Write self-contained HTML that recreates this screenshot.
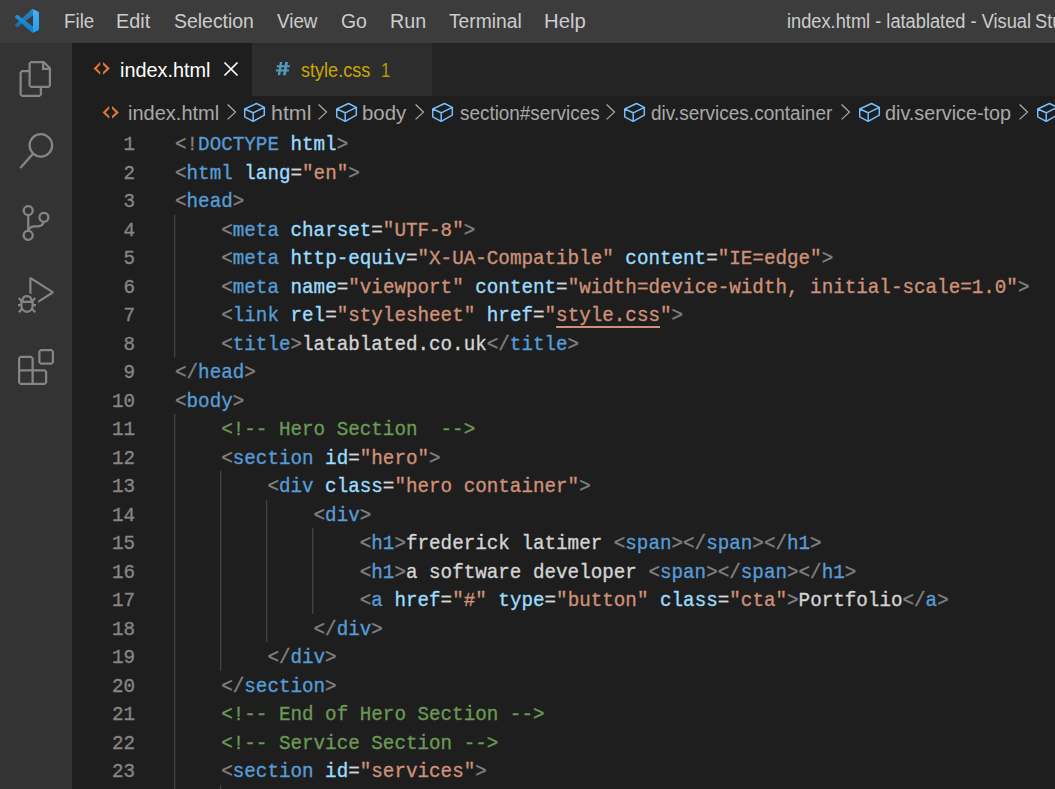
<!DOCTYPE html>
<html><head><meta charset="utf-8"><title>VS Code</title>
<style>
html,body{margin:0;padding:0;width:1055px;height:789px;overflow:hidden;background:#1e1e1e;position:relative}
body{font-family:"Liberation Sans",sans-serif}
#title{position:absolute;left:0;top:0;width:1055px;height:43px;background:#3c3c3c}
#act{position:absolute;left:0;top:43px;width:72px;height:746px;background:#333333}
.ai{position:absolute;left:18px}
.tab{position:absolute;top:0;height:53px}
#tabs{position:absolute;left:72px;top:43px;width:983px;height:53px;background:#252526}
.ln{position:absolute;left:79.4px;width:56px;transform:scaleX(0.93);transform-origin:100% 0;text-align:right;height:28.5px;line-height:28.5px;margin-top:2px;font-family:"Liberation Mono",monospace;font-size:20.7px;color:#858585;-webkit-text-stroke:0.35px}
.cl{position:absolute;left:175px;height:28.5px;line-height:28.5px;margin-top:2px;font-family:"Liberation Mono",monospace;font-size:20.7px;white-space:pre;color:#d4d4d4;transform:scaleX(0.93);transform-origin:0 0;-webkit-text-stroke:0.35px}
.t{position:absolute;white-space:nowrap;transform-origin:0 0}
.ic{position:absolute;display:block}
.g{position:absolute;width:1px;background:#424242;box-shadow:1px 0 0 #2a2a2a}
.p{color:#808080} .n{color:#569cd6} .a{color:#9cdcfe} .s{color:#ce9178} .x{color:#d4d4d4} .c{color:#6a9955}
.u{text-decoration:underline;text-decoration-thickness:2px;text-underline-offset:5px}
</style></head><body>
<div id="title"><svg style="position:absolute;left:15px;top:9px" width="24" height="24" viewBox="0 0 100 100">
<defs><linearGradient id="vg" x1="0" y1="0" x2="0" y2="1"><stop offset="0" stop-color="#fff" stop-opacity="0.2"/><stop offset="1" stop-color="#fff" stop-opacity="0.02"/></linearGradient><clipPath id="vc"><path clip-rule="evenodd" d="M70.9119 99.3171C72.4869 99.9307 74.2828 99.8914 75.8725 99.1264L96.4608 89.2197C98.6242 88.1787 100 85.9892 100 83.5872V16.4133C100 14.0113 98.6243 11.8218 96.4609 10.7808L75.8725 0.873756C73.7862 -0.130129 71.3446 0.11576 69.5135 1.44695C69.252 1.63711 69.0028 1.84943 68.769 2.08341L29.3551 38.0415L12.1872 25.0096C10.589 23.7965 8.35363 23.8959 6.86933 25.2461L1.36303 30.2549C-0.452552 31.9064 -0.454633 34.7627 1.35853 36.417L16.2471 50.0001L1.35853 63.5832C-0.454633 65.2374 -0.452552 68.0938 1.36303 69.7453L6.86933 74.7541C8.35363 76.1043 10.589 76.2037 12.1872 74.9905L29.3551 61.9587L68.769 97.9167C69.3925 98.5406 70.1246 99.0104 70.9119 99.3171ZM75.0152 27.2989L45.1091 50.0001L75.0152 72.7012V27.2989Z"/></clipPath></defs>
<g clip-path="url(#vc)">
<path d="M96.4614 10.7962L75.8569 0.875542C73.4719 -0.272773 70.6217 0.211611 68.75 2.08333L1.29858 63.5832C-0.515693 65.2373 -0.513607 68.0937 1.30308 69.7452L6.81272 74.754C8.29793 76.1042 10.5347 76.2036 12.1338 74.9905L93.3609 13.3699C96.0859 11.3026 100 13.2462 100 16.6667V16.4275C100 14.0265 98.6246 11.8378 96.4614 10.7962Z" fill="#0065A9"/>
<path d="M96.4614 89.2038L75.8569 99.1245C73.4719 100.273 70.6217 99.7884 68.75 97.9167L1.29858 36.4169C-0.515693 34.7627 -0.513607 31.9063 1.30308 30.2548L6.81272 25.246C8.29793 23.8958 10.5347 23.7964 12.1338 25.0095L93.3609 86.6301C96.0859 88.6974 100 86.7538 100 83.3334V83.5726C100 85.9735 98.6246 88.1622 96.4614 89.2038Z" fill="#007ACC"/>
<path d="M75.8578 99.1263C73.4721 100.274 70.6219 99.7885 68.75 97.9166C71.0564 100.223 75 98.5895 75 95.3278V4.67213C75 1.41039 71.0564 -0.223106 68.75 2.08329C70.6219 0.211402 73.4721 -0.273666 75.8578 0.873633L96.4587 10.7807C98.6234 11.8217 100 14.0112 100 16.4132V83.5871C100 85.9891 98.6234 88.1786 96.4586 89.2196L75.8578 99.1263Z" fill="#1F9CF0"/>
<rect x="0" y="0" width="100" height="100" fill="url(#vg)"/>
</g></svg><div class="t" style="left:64.16px;top:12.49px;font-size:19.5px;line-height:19.5px;color:#cccccc;transform:scaleX(0.9621);">File</div><div class="t" style="left:116.37px;top:12.49px;font-size:19.5px;line-height:19.5px;color:#cccccc;transform:scaleX(1.0157);">Edit</div><div class="t" style="left:173.90px;top:12.49px;font-size:19.5px;line-height:19.5px;color:#cccccc;transform:scaleX(0.9962);">Selection</div><div class="t" style="left:277.20px;top:12.49px;font-size:19.5px;line-height:19.5px;color:#cccccc;transform:scaleX(0.9641);">View</div><div class="t" style="left:341.00px;top:12.49px;font-size:19.5px;line-height:19.5px;color:#cccccc;transform:scaleX(0.9959);">Go</div><div class="t" style="left:389.59px;top:12.49px;font-size:19.5px;line-height:19.5px;color:#cccccc;transform:scaleX(1.0091);">Run</div><div class="t" style="left:449.21px;top:12.49px;font-size:19.5px;line-height:19.5px;color:#cccccc;transform:scaleX(0.9861);">Terminal</div><div class="t" style="left:544.04px;top:12.49px;font-size:19.5px;line-height:19.5px;color:#cccccc;transform:scaleX(1.0397);">Help</div><div class="t" style="left:787.18px;top:12.49px;font-size:19.5px;line-height:19.5px;color:#cccccc;transform:scaleX(0.9353);">index.html - latablated - Visual</div><div class="t" style="left:1035.06px;top:12.49px;font-size:19.5px;line-height:19.5px;color:#cccccc;transform:scaleX(0.9353)">Studio Code</div></div>
<div id="act"><svg class="ai" style="top:18px" width="36" height="36" viewBox="0 0 24 24" fill="#858585"><path fill-rule="evenodd" clip-rule="evenodd" d="M17.5 0h-9L7 1.5V6H2.5L1 7.5v15.07L2.5 24h12.07L16 22.57V18h4.7l1.3-1.43V4.5L17.5 0zm0 2.12l2.38 2.38H17.5V2.12zm-3 20.38h-12v-15H7v9.07L8.5 18h6v4.5zm6-6h-12v-15H16V6h4.5v10.5z"/></svg><svg class="ai" style="top:90px" width="36" height="36" viewBox="0 0 24 24" fill="#858585"><path fill-rule="evenodd" clip-rule="evenodd" d="M15.25 0a8.25 8.25 0 0 0-6.18 13.72L1 22.880l1.12 1 8.05-9.12A8.251 8.251 0 1 0 15.25.01V0zm0 15a6.75 6.75 0 1 1 0-13.5 6.75 6.75 0 0 1 0 13.5z"/></svg><svg class="ai" style="top:162px" width="36" height="36" viewBox="0 0 24 24" fill="#858585"><path fill-rule="evenodd" clip-rule="evenodd" d="M21.007 8.222A3.738 3.738 0 0 0 15.045 5.2a3.737 3.737 0 0 0 1.156 6.583 2.988 2.988 0 0 1-2.668 1.67h-2.99a4.456 4.456 0 0 0-2.989 1.165V7.4a3.737 3.737 0 1 0-1.494 0v9.117a3.776 3.776 0 1 0 1.816.099 2.99 2.990 0 0 1 2.668-1.667h2.99a4.484 4.484 0 0 0 4.223-3.039 3.736 3.736 0 0 0 3.25-3.687zM4.565 3.738a2.242 2.242 0 1 1 4.484 0 2.242 2.242 0 0 1-4.484 0zm4.484 16.441a2.242 2.242 0 1 1-4.484 0 2.242 2.242 0 0 1 4.484 0zm8.221-9.715a2.242 2.242 0 1 1 0-4.485 2.242 2.242 0 0 1 0 4.485z"/></svg><svg class="ai" style="top:234px" width="36" height="36" viewBox="0 0 24 24" fill="#858585"><path fill-rule="evenodd" clip-rule="evenodd" d="M10.94 13.5l-1.32 1.32a3.73 3.73 0 0 0-7.24 0L1.06 13.5 0 14.56l1.72 1.72-.22.22V18H0v1.5h1.5v.08c.077.489.214.966.41 1.42L0 22.94 1.06 24l1.65-1.65A4.308 4.308 0 0 0 6 24a4.31 4.310 0 0 0 3.29-1.650L10.94 24 12 22.94 10.09 21c.198-.464.336-.951.41-1.45v-.1H12V18h-1.5v-1.5l-.22-.22L12 14.560l-1.06-1.06zM6 13.5a2.25 2.25 0 0 1 2.25 2.25h-4.5A2.25 2.25 0 0 1 6 13.5zm3 6a3.33 3.33 0 0 1-3 3 3.33 3.33 0 0 1-3-3v-2.25h6v2.25zm14.76-9.9v1.26L13.5 17.37V15.6l8.5-5.37L9 2v9.46a5.07 5.07 0 0 0-1.5-.72V.63L8.64 0l15.12 9.6z"/></svg><svg class="ai" style="top:306px" width="36" height="36" viewBox="0 0 24 24" fill="#858585"><path fill-rule="evenodd" clip-rule="evenodd" d="M13.5 1.5L15 0h7.5L24 1.5V9l-1.5 1.5H15L13.5 9V1.5zm1.5 0V9h7.5V1.5H15zM0 15V6l1.5-1.5H9L10.5 6v7.5H18l1.5 1.5v7.5L18 24H1.5L0 22.5V15zm9-1.5V6H1.5v7.5H9zM9 15H1.5v7.5H9V15zm1.5 7.5H18V15h-7.5v7.5z"/></svg></div>
<div id="tabs">
 <div class="tab" style="left:0;width:180px;background:#1e1e1e"></div>
 <div class="tab" style="left:180px;width:180px;background:#2d2d2d"></div>
</div>
<div class="t" style="left:119.68px;top:61.29px;font-size:19.5px;line-height:19.5px;color:#ffffff;transform:scaleX(1.0174);">index.html</div><div class="t" style="left:301.34px;top:61.29px;font-size:19.5px;line-height:19.5px;color:#cca700;transform:scaleX(0.9266);">style.css</div><div class="t" style="left:381.21px;top:61.29px;font-size:19.5px;line-height:19.5px;color:#b8960a;transform:scaleX(0.8571);">1</div><svg class="ic" style="left:93px;top:61px" width="18" height="15" viewBox="0 0 18 15"><path fill="#e37933" d="M7.2 1 L0.6 7.4 L7.2 13.8 L7.2 11 L3.6 7.4 L7.2 3.8 Z M10 1 L16.9 7.4 L10 13.8 L10 11 L13.6 7.4 L10 3.8 Z"/></svg><svg class="ic" style="left:222px;top:60px" width="18" height="18" viewBox="0 0 18 18"><path d="M2.5 2.5 L15.5 15.5 M15.5 2.5 L2.5 15.5" stroke="#ffffff" stroke-width="1.7"/></svg><svg class="ic" style="left:275px;top:61px" width="16" height="15" viewBox="0 0 16 15"><path fill="#519aba" d="M4.9 1 L7.3 1 L5.2 14.2 L2.7 14.2 Z M10.2 1 L13 1 L10.8 14.2 L8 14.2 Z M1.8 4.2 H14.8 V6.3 H1.8 Z M0.9 8.5 H13.9 V10.6 H0.9 Z"/></svg>
<svg class="ic" style="left:102px;top:105px" width="18" height="15" viewBox="0 0 18 15"><path fill="#e37933" d="M7.2 1 L0.6 7.4 L7.2 13.8 L7.2 11 L3.6 7.4 L7.2 3.8 Z M10 1 L16.9 7.4 L10 13.8 L10 11 L13.6 7.4 L10 3.8 Z"/></svg><div class="t" style="left:128.17px;top:104.29px;font-size:19.5px;line-height:19.5px;color:#a9a9a9;transform:scaleX(1.0267);">index.html</div><svg class="ic" style="left:226px;top:103px" width="12" height="18" viewBox="0 0 12 18"><path d="M1.6 1.5 L9.4 9.1 L1.6 16.4" stroke="#a9a9a9" stroke-width="1.3" fill="none"/></svg><svg class="ic" style="left:244.1px;top:102px" width="22" height="21" viewBox="0 0 22 21"><path d="M12.5 1.5 L20.3 5.3 L20.3 13.2 L9.2 19.3 L0.7 14.8 L0.7 7 Z M0.7 7 L9.2 10.8 L20.3 5.3 M9.2 10.8 L9.2 19.3" stroke="#75beff" stroke-width="1.5" stroke-linejoin="round" fill="none"/></svg><div class="t" style="left:270.77px;top:104.29px;font-size:19.5px;line-height:19.5px;color:#a9a9a9;transform:scaleX(1.0962);">html</div><svg class="ic" style="left:317.1px;top:103px" width="12" height="18" viewBox="0 0 12 18"><path d="M1.6 1.5 L9.4 9.1 L1.6 16.4" stroke="#a9a9a9" stroke-width="1.3" fill="none"/></svg><svg class="ic" style="left:336.0px;top:102px" width="22" height="21" viewBox="0 0 22 21"><path d="M12.5 1.5 L20.3 5.3 L20.3 13.2 L9.2 19.3 L0.7 14.8 L0.7 7 Z M0.7 7 L9.2 10.8 L20.3 5.3 M9.2 10.8 L9.2 19.3" stroke="#75beff" stroke-width="1.5" stroke-linejoin="round" fill="none"/></svg><div class="t" style="left:362.35px;top:104.29px;font-size:19.5px;line-height:19.5px;color:#a9a9a9;transform:scaleX(1.0439);">body</div><svg class="ic" style="left:413.8px;top:103px" width="12" height="18" viewBox="0 0 12 18"><path d="M1.6 1.5 L9.4 9.1 L1.6 16.4" stroke="#a9a9a9" stroke-width="1.3" fill="none"/></svg><svg class="ic" style="left:432.0px;top:102px" width="22" height="21" viewBox="0 0 22 21"><path d="M12.5 1.5 L20.3 5.3 L20.3 13.2 L9.2 19.3 L0.7 14.8 L0.7 7 Z M0.7 7 L9.2 10.8 L20.3 5.3 M9.2 10.8 L9.2 19.3" stroke="#75beff" stroke-width="1.5" stroke-linejoin="round" fill="none"/></svg><div class="t" style="left:459.52px;top:104.29px;font-size:19.5px;line-height:19.5px;color:#a9a9a9;transform:scaleX(0.9685);">section#services</div><svg class="ic" style="left:604.8px;top:103px" width="12" height="18" viewBox="0 0 12 18"><path d="M1.6 1.5 L9.4 9.1 L1.6 16.4" stroke="#a9a9a9" stroke-width="1.3" fill="none"/></svg><svg class="ic" style="left:624.4px;top:102px" width="22" height="21" viewBox="0 0 22 21"><path d="M12.5 1.5 L20.3 5.3 L20.3 13.2 L9.2 19.3 L0.7 14.8 L0.7 7 Z M0.7 7 L9.2 10.8 L20.3 5.3 M9.2 10.8 L9.2 19.3" stroke="#75beff" stroke-width="1.5" stroke-linejoin="round" fill="none"/></svg><div class="t" style="left:651.12px;top:104.29px;font-size:19.5px;line-height:19.5px;color:#a9a9a9;transform:scaleX(0.9746);">div.services.container</div><svg class="ic" style="left:839.7px;top:103px" width="12" height="18" viewBox="0 0 12 18"><path d="M1.6 1.5 L9.4 9.1 L1.6 16.4" stroke="#a9a9a9" stroke-width="1.3" fill="none"/></svg><svg class="ic" style="left:858.8px;top:102px" width="22" height="21" viewBox="0 0 22 21"><path d="M12.5 1.5 L20.3 5.3 L20.3 13.2 L9.2 19.3 L0.7 14.8 L0.7 7 Z M0.7 7 L9.2 10.8 L20.3 5.3 M9.2 10.8 L9.2 19.3" stroke="#75beff" stroke-width="1.5" stroke-linejoin="round" fill="none"/></svg><div class="t" style="left:884.99px;top:104.29px;font-size:19.5px;line-height:19.5px;color:#a9a9a9;transform:scaleX(1.0139);">div.service-top</div><svg class="ic" style="left:1018.2px;top:103px" width="12" height="18" viewBox="0 0 12 18"><path d="M1.6 1.5 L9.4 9.1 L1.6 16.4" stroke="#a9a9a9" stroke-width="1.3" fill="none"/></svg><svg class="ic" style="left:1036.5px;top:102px" width="22" height="21" viewBox="0 0 22 21"><path d="M12.5 1.5 L20.3 5.3 L20.3 13.2 L9.2 19.3 L0.7 14.8 L0.7 7 Z M0.7 7 L9.2 10.8 L20.3 5.3 M9.2 10.8 L9.2 19.3" stroke="#75beff" stroke-width="1.5" stroke-linejoin="round" fill="none"/></svg>
<div class="g" style="left:174px;top:214.5px;height:142.5px"></div><div class="g" style="left:174px;top:414.0px;height:399.0px"></div><div class="g" style="left:220px;top:471.0px;height:199.5px"></div><div class="g" style="left:266px;top:499.5px;height:142.5px"></div><div class="g" style="left:312px;top:528.0px;height:85.5px"></div><div class="g" style="left:220px;top:784.5px;height:28.5px"></div>
<div class="ln" style="top:129.0px">1</div><div class="cl" style="top:129.0px"><span class="p">&lt;!</span><span class="n">DOCTYPE</span> <span class="a">html</span><span class="p">&gt;</span></div><div class="ln" style="top:157.5px">2</div><div class="cl" style="top:157.5px"><span class="p">&lt;</span><span class="n">html</span> <span class="a">lang</span><span class="x">=</span><span class="s">"en"</span><span class="p">&gt;</span></div><div class="ln" style="top:186.0px">3</div><div class="cl" style="top:186.0px"><span class="p">&lt;</span><span class="n">head</span><span class="p">&gt;</span></div><div class="ln" style="top:214.5px">4</div><div class="cl" style="top:214.5px">    <span class="p">&lt;</span><span class="n">meta</span> <span class="a">charset</span><span class="x">=</span><span class="s">"UTF-8"</span><span class="p">&gt;</span></div><div class="ln" style="top:243.0px">5</div><div class="cl" style="top:243.0px">    <span class="p">&lt;</span><span class="n">meta</span> <span class="a">http-equiv</span><span class="x">=</span><span class="s">"X-UA-Compatible"</span> <span class="a">content</span><span class="x">=</span><span class="s">"IE=edge"</span><span class="p">&gt;</span></div><div class="ln" style="top:271.5px">6</div><div class="cl" style="top:271.5px">    <span class="p">&lt;</span><span class="n">meta</span> <span class="a">name</span><span class="x">=</span><span class="s">"viewport"</span> <span class="a">content</span><span class="x">=</span><span class="s">"width=device-width, initial-scale=1.0"</span><span class="p">&gt;</span></div><div class="ln" style="top:300.0px">7</div><div class="cl" style="top:300.0px">    <span class="p">&lt;</span><span class="n">link</span> <span class="a">rel</span><span class="x">=</span><span class="s">"stylesheet"</span> <span class="a">href</span><span class="x">=</span><span class="s">"</span><span class="s u">style.css</span><span class="s">"</span><span class="p">&gt;</span></div><div class="ln" style="top:328.5px">8</div><div class="cl" style="top:328.5px">    <span class="p">&lt;</span><span class="n">title</span><span class="p">&gt;</span><span class="x">latablated.co.uk</span><span class="p">&lt;/</span><span class="n">title</span><span class="p">&gt;</span></div><div class="ln" style="top:357.0px">9</div><div class="cl" style="top:357.0px"><span class="p">&lt;/</span><span class="n">head</span><span class="p">&gt;</span></div><div class="ln" style="top:385.5px">10</div><div class="cl" style="top:385.5px"><span class="p">&lt;</span><span class="n">body</span><span class="p">&gt;</span></div><div class="ln" style="top:414.0px">11</div><div class="cl" style="top:414.0px">    <span class="c">&lt;!-- Hero Section  --&gt;</span></div><div class="ln" style="top:442.5px">12</div><div class="cl" style="top:442.5px">    <span class="p">&lt;</span><span class="n">section</span> <span class="a">id</span><span class="x">=</span><span class="s">"hero"</span><span class="p">&gt;</span></div><div class="ln" style="top:471.0px">13</div><div class="cl" style="top:471.0px">        <span class="p">&lt;</span><span class="n">div</span> <span class="a">class</span><span class="x">=</span><span class="s">"hero container"</span><span class="p">&gt;</span></div><div class="ln" style="top:499.5px">14</div><div class="cl" style="top:499.5px">            <span class="p">&lt;</span><span class="n">div</span><span class="p">&gt;</span></div><div class="ln" style="top:528.0px">15</div><div class="cl" style="top:528.0px">                <span class="p">&lt;</span><span class="n">h1</span><span class="p">&gt;</span><span class="x">frederick latimer </span><span class="p">&lt;</span><span class="n">span</span><span class="p">&gt;&lt;/</span><span class="n">span</span><span class="p">&gt;&lt;/</span><span class="n">h1</span><span class="p">&gt;</span></div><div class="ln" style="top:556.5px">16</div><div class="cl" style="top:556.5px">                <span class="p">&lt;</span><span class="n">h1</span><span class="p">&gt;</span><span class="x">a software developer </span><span class="p">&lt;</span><span class="n">span</span><span class="p">&gt;&lt;/</span><span class="n">span</span><span class="p">&gt;&lt;/</span><span class="n">h1</span><span class="p">&gt;</span></div><div class="ln" style="top:585.0px">17</div><div class="cl" style="top:585.0px">                <span class="p">&lt;</span><span class="n">a</span> <span class="a">href</span><span class="x">=</span><span class="s">"#"</span> <span class="a">type</span><span class="x">=</span><span class="s">"button"</span> <span class="a">class</span><span class="x">=</span><span class="s">"cta"</span><span class="p">&gt;</span><span class="x">Portfolio</span><span class="p">&lt;/</span><span class="n">a</span><span class="p">&gt;</span></div><div class="ln" style="top:613.5px">18</div><div class="cl" style="top:613.5px">            <span class="p">&lt;/</span><span class="n">div</span><span class="p">&gt;</span></div><div class="ln" style="top:642.0px">19</div><div class="cl" style="top:642.0px">        <span class="p">&lt;/</span><span class="n">div</span><span class="p">&gt;</span></div><div class="ln" style="top:670.5px">20</div><div class="cl" style="top:670.5px">    <span class="p">&lt;/</span><span class="n">section</span><span class="p">&gt;</span></div><div class="ln" style="top:699.0px">21</div><div class="cl" style="top:699.0px">    <span class="c">&lt;!-- End of Hero Section --&gt;</span></div><div class="ln" style="top:727.5px">22</div><div class="cl" style="top:727.5px">    <span class="c">&lt;!-- Service Section --&gt;</span></div><div class="ln" style="top:756.0px">23</div><div class="cl" style="top:756.0px">    <span class="p">&lt;</span><span class="n">section</span> <span class="a">id</span><span class="x">=</span><span class="s">"services"</span><span class="p">&gt;</span></div>
</body></html>
